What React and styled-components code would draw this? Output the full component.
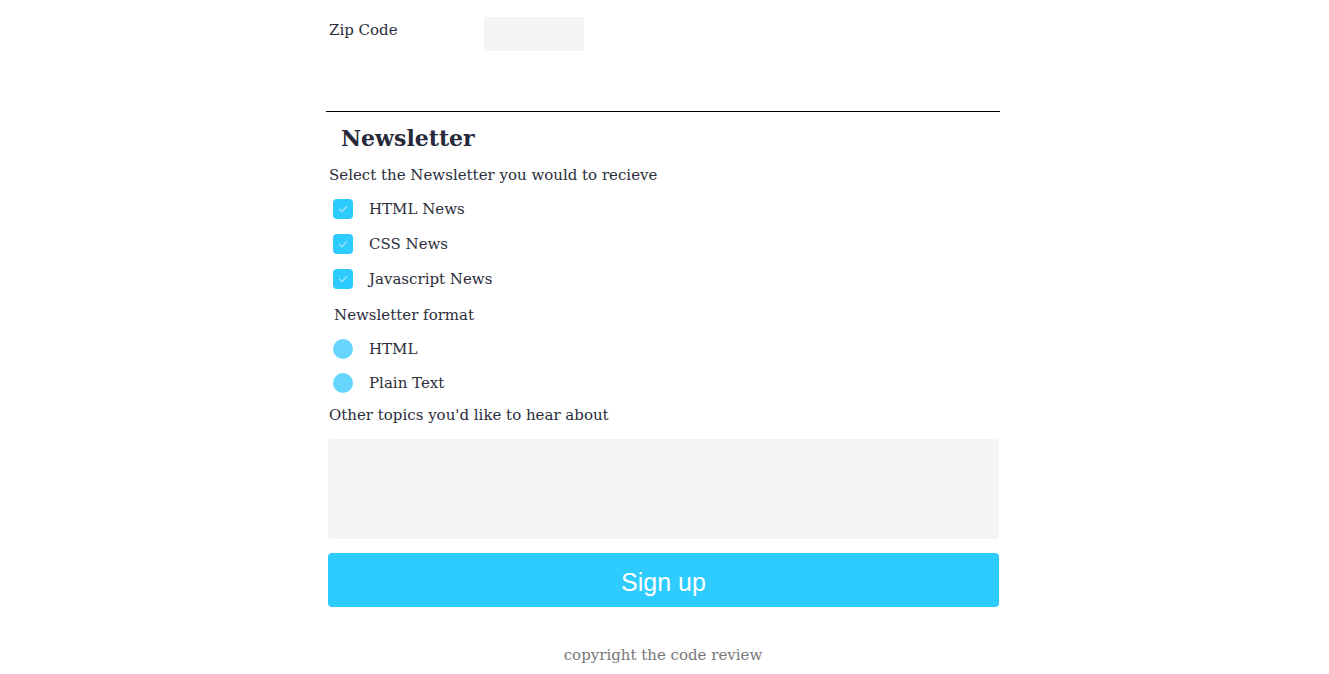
import React from 'react';
import styled, { createGlobalStyle } from 'styled-components';

const GlobalStyle = createGlobalStyle`
  body {
    margin: 0;
    background: #fff;
    font-family: "DejaVu Serif", "Liberation Serif", serif;
    color: #2b2d3a;
  }
`;

const newsletters = ['HTML News', 'CSS News', 'Javascript News'];
const formats = ['HTML', 'Plain Text'];

export default function App() {
  return (
    <>
      <GlobalStyle />
      <Page>
        <Form onSubmit={e => e.preventDefault()}>
          <FieldRow>
            <Label htmlFor="zip">Zip Code</Label>
            <ZipInput id="zip" />
          </FieldRow>

          <Divider />
          <Heading>Newsletter</Heading>
          <Text>Select the Newsletter you would to recieve</Text>

          <OptionList>
            {newsletters.map(name => (
              <Option key={name}>
                <CheckBox>
                  <svg width="12" height="12" viewBox="0 0 12 12">
                    <path d="M2.5 6.3l2.4 2.4 4.6-5" fill="none" stroke="#8fe0ff" strokeWidth="1.6" strokeLinecap="round" strokeLinejoin="round" />
                  </svg>
                </CheckBox>
                {name}
              </Option>
            ))}
          </OptionList>

          <Text $indent>Newsletter format</Text>
          <OptionList $tight>
            {formats.map(name => (
              <Option key={name}>
                <Radio />
                {name}
              </Option>
            ))}
          </OptionList>

          <Text>Other topics you'd like to hear about</Text>
          <TextArea />
          <SubmitButton type="submit">Sign up</SubmitButton>
        </Form>
        <Footer>copyright the code review</Footer>
      </Page>
    </>
  );
}

const Page = styled.main`
  width: 674px;
  padding: 17px 3px 0 0;
  margin: 0 auto;
`;

const Form = styled.form`
  display: flex;
  flex-direction: column;
`;

const FieldRow = styled.div`
  display: flex;
  align-items: flex-start;
  padding-left: 3px;
`;

const Label = styled.label`
  width: 155px;
  font-size: 15px;
  line-height: 26px;
`;

const ZipInput = styled.input`
  width: 100px;
  height: 34px;
  box-sizing: border-box;
  border: none;
  background: #f4f4f4;
`;

const Divider = styled.hr`
  margin: 60px 0 0;
  border: none;
  border-top: 1px solid #000;
  width: 674px;
`;

const Heading = styled.h2`
  margin: 10px 0 3px 15px;
  font-size: 22px;
  line-height: 32px;
  font-weight: bold;
  color: #262a3b;
`;

const Text = styled.p`
  margin: 7px 0 0 ${p => (p.$indent ? '8px' : '3px')};
  font-size: 15px;
  line-height: 22px;
`;

const OptionList = styled.div`
  display: flex;
  flex-direction: column;
  gap: ${p => (p.$tight ? '14px' : '15px')};
  margin: ${p => (p.$tight ? '13px 0 4px' : '13px 0 8px')};
  padding-left: 7px;
`;

const Option = styled.label`
  display: flex;
  align-items: center;
  gap: 16px;
  font-size: 15px;
  line-height: 20px;
`;

const CheckBox = styled.span`
  width: 20px;
  height: 20px;
  border-radius: 4px;
  background: #2ecbff;
  display: flex;
  align-items: center;
  justify-content: center;
`;

const Radio = styled.span`
  width: 20px;
  height: 20px;
  border-radius: 50%;
  background: #66d6ff;
`;

const TextArea = styled.textarea`
  margin: 13px 0 0 2px;
  width: 671px;
  height: 100px;
  box-sizing: border-box;
  border: none;
  border-radius: 4px;
  background: #f4f4f4;
  resize: none;
`;

const SubmitButton = styled.button`
  margin: 14px 0 0 2px;
  padding: 4px 0 0;
  width: 671px;
  height: 54px;
  border: none;
  border-radius: 4px;
  background: #2ecbff;
  color: #fff;
  font-family: "Liberation Sans", Arial, sans-serif;
  font-size: 25px;
`;

const Footer = styled.footer`
  margin-top: 39px;
  text-align: center;
  font-size: 15px;
  color: #777;
`;
